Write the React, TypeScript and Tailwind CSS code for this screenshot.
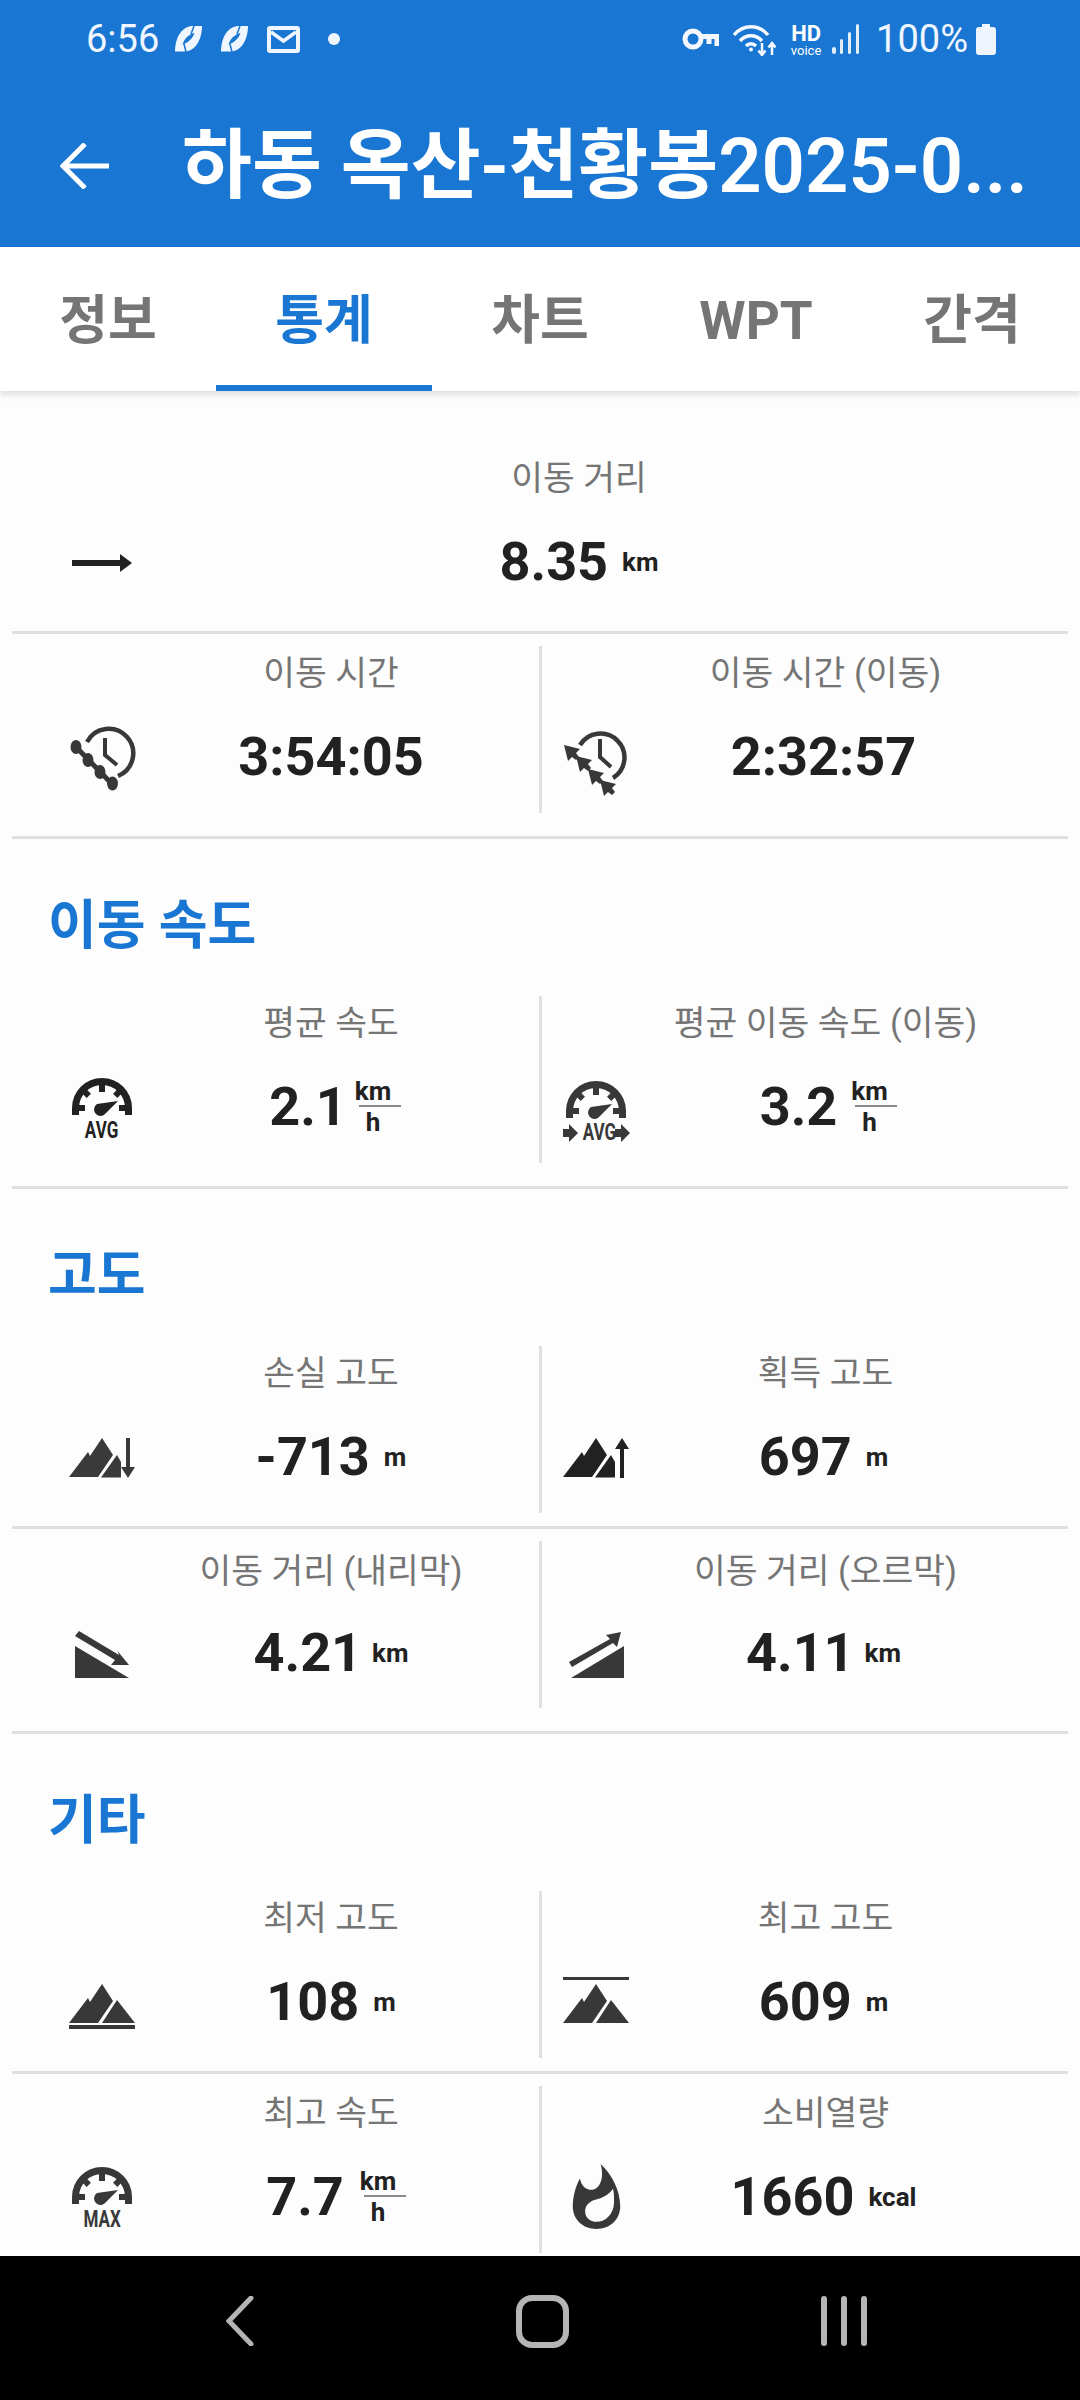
import type { ReactNode } from "react"

const blue = "#1976d2"

function SyncIcon() {
    return <svg width="27" height="26" viewBox="0 0 27 26">
        <path d="M27 0C27 14 20 25 10 25.500L0 25.500C0 10 8 0 18 0Z" fill="#f0f6ff"/>
        <path d="M19.500 7C14 8 9 13 7.500 18.500C13 17 18 12 19.500 7Z" fill={blue}/>
        <path d="M19 0L16 8M11 26L9 18" stroke={blue} strokeWidth="1.500"/>
    </svg>
}

function MailIcon() {
    return <svg width="33" height="27" viewBox="0 0 33 27">
        <rect width="33" height="27" rx="3" fill="#f0f6ff"/>
        <rect x="4" y="4" width="25" height="19" fill={blue}/>
        <path d="M4 6L16.500 15L29 6" fill="none" stroke="#f0f6ff" strokeWidth="3.500"/>
    </svg>
}

function KeyIcon() {
    return <svg width="37" height="22" viewBox="0 0 37 22" fill="none" stroke="#f5f9ff">
        <circle cx="11" cy="11" r="8" strokeWidth="5"/>
        <path d="M18 8.500H35V18M27 9V16" strokeWidth="5"/>
    </svg>
}

function WifiIcon() {
    return <svg width="44" height="33" viewBox="0 0 44 33" fill="none" stroke="#f5f9ff" strokeWidth="3.500">
        <path d="M2 12C11 1 27 1 36 12"/>
        <path d="M8 18C14 11 24 11 30 18"/>
        <path d="M14 23C17 20 21 20 24 23"/>
        <circle cx="19" cy="26.500" r="2" fill="#f5f9ff" stroke="none"/>
        <path d="M30 20V32M26.500 27.500L30 32L33.500 27.500" strokeWidth="2.500"/>
        <path d="M40 32V20M36.500 24.500L40 20L43.500 24.500" strokeWidth="2.500"/>
    </svg>
}

function SignalIcon() {
    return <svg width="28" height="30" viewBox="0 0 28 30" fill="#e3eefb">
        <rect x="0" y="23" width="4" height="7" rx="2"/>
        <rect x="8" y="15" width="3" height="15" rx="1.500"/>
        <rect x="16" y="8" width="3" height="22" rx="1.500"/>
        <rect x="24" y="0" width="3" height="30" rx="1.500"/>
    </svg>
}

function BatteryIcon() {
    return <svg width="20" height="31" viewBox="0 0 20 31" fill="#eef5ff">
        <path d="M6 0H14V3H17Q20 3 20 6V28Q20 31 17 31H3Q0 31 0 28V6Q0 3 3 3H6Z"/>
    </svg>
}

function StatusBar() {
    return <div className="flex h-[78px] items-center pl-[86px] pr-[84px] text-[38px] leading-none text-[#f0f6ff]">
        <span className="mr-[16px]">6:56</span>
        <div className="mr-[19px]"><SyncIcon/></div>
        <div className="mr-[19px]"><SyncIcon/></div>
        <MailIcon/>
        <div className="ml-[28px] h-[12px] w-[12px] rounded-full bg-[#f0f6ff]"></div>
        <div className="ml-auto"><KeyIcon/></div>
        <div className="ml-[13px]"><WifiIcon/></div>
        <div className="ml-[14px] mt-[2px] flex w-[32px] flex-col items-center font-bold text-white">
            <span className="text-[22px] leading-[20px]">HD</span>
            <span className="text-[13px] font-normal leading-[13px]">voice</span>
        </div>
        <div className="ml-[10px]"><SignalIcon/></div>
        <span className="ml-[16px]">100%</span>
        <div className="ml-[8px]"><BatteryIcon/></div>
    </div>
}

function Header() {
    return <div className="bg-[#1976d2]">
        <StatusBar/>
        <div className="flex h-[169px] items-center pl-[60px] pt-[6px]">
            <svg width="49" height="46" viewBox="0 0 49 46" fill="none" stroke="#fff" strokeWidth="5">
                <path d="M49 23H3M25 1L3 23L25 45"/>
            </svg>
            <div className="ml-[73px] whitespace-nowrap text-[76px] font-semibold leading-none text-white">하동 옥산-천황봉2025-0...</div>
        </div>
    </div>
}

function Tabs() {
    const tabs = ["정보", "통계", "차트", "WPT", "간격"]
    return <div className="relative z-10 flex h-[144px] bg-white shadow-[0_4px_6px_rgba(0,0,0,0.12)]">
        {tabs.map((tab, i) => (
            <div key={tab} className={i === 1
                ? "flex w-[216px] items-center justify-center border-b-[6px] border-[#1976d2] pt-[12px] text-[53px] font-bold text-[#1976d2]"
                : "flex w-[216px] items-center justify-center border-b-[6px] border-transparent pt-[12px] text-[53px] font-bold text-[#757575]"}>
                {tab}
            </div>
        ))}
    </div>
}

function ArrowRightIcon() {
    return <svg width="60" height="18" viewBox="0 0 60 18" fill="#212121">
        <rect x="0" y="6" width="48" height="6"/>
        <path d="M48 0L60 9L48 18Z"/>
    </svg>
}

function ClockDotsIcon() {
    return <svg width="70" height="74" viewBox="0 0 70 74" fill="none" stroke="#383838">
        <path d="M20 21A24.500 24.500 0 1 1 51 55" strokeWidth="4.500"/>
        <path d="M38 17V34L50 44" strokeWidth="4"/>
        <path d="M9 26L45 63" strokeWidth="5"/>
        <g fill="#383838" stroke="none">
            <ellipse cx="9" cy="26" rx="5.500" ry="7"/>
            <ellipse cx="21" cy="39" rx="5.500" ry="7"/>
            <ellipse cx="33" cy="51" rx="5.500" ry="7"/>
            <ellipse cx="45.500" cy="62.500" rx="5.500" ry="7"/>
        </g>
    </svg>
}

function SmallPointer({ x, y }: { x: number; y: number }) {
    return <path transform={`translate(${x} ${y})`} d="M0 0L16 4L12 8L15 12L12 15L8 12L4 16Z"/>
}

function ClockPointersIcon() {
    return <svg width="68" height="76" viewBox="0 0 68 76" fill="none" stroke="#383838">
        <path d="M18 25A24 24 0 1 1 51 58" strokeWidth="4.500"/>
        <path d="M38 19V37L49 47" strokeWidth="4"/>
        <g fill="#383838" stroke="none">
            <SmallPointer x={2} y={25}/>
            <SmallPointer x={14} y={36}/>
            <SmallPointer x={26} y={49}/>
            <SmallPointer x={38} y={60}/>
        </g>
    </svg>
}

// speedometer dial without its caption
function GaugeDial({ color }: { color: string }) {
    return <svg width="60" height="38" viewBox="0 0 60 38" fill={color}>
        <path d="M3.500 37V30A26.500 26.500 0 0 1 56.500 30V37" fill="none" stroke={color} strokeWidth="7"/>
        <rect x="27" y="6" width="6" height="8"/>
        <rect x="11" y="12" width="6" height="7" transform="rotate(-45 14 15)"/>
        <rect x="43" y="12" width="6" height="7" transform="rotate(45 46 15)"/>
        <rect x="5" y="27" width="8" height="6"/>
        <rect x="47" y="27" width="8" height="6"/>
        <path d="M46 23L34 35A6.500 6.500 0 1 1 25 26Z"/>
    </svg>
}

function GaugeIcon({ label, color, className }: { label: string; color: string; className: string }) {
    return <div className={`flex flex-col items-center ${className}`} style={{ color }}>
        <GaugeDial color={color}/>
        <span className="mt-[5px] scale-x-[0.74] text-[23px] font-bold leading-[20px]">{label}</span>
    </div>
}

function GaugeMoveIcon() {
    return <div className="mt-[8px] flex flex-col items-center text-[#383838]">
        <GaugeDial color="#383838"/>
        <div className="mt-[4px] flex items-center">
            <svg width="15" height="18" viewBox="0 0 15 18" fill="#383838"><path d="M0 5H6V0L15 9L6 18V13H0Z"/></svg>
            <span className="w-[37px] scale-x-[0.74] text-center text-[23px] font-bold leading-[20px]">AVG</span>
            <svg width="15" height="18" viewBox="0 0 15 18" fill="#383838"><path d="M0 5H6V0L15 9L6 18V13H0Z"/></svg>
        </div>
    </div>
}

const bigPeak = "M0 39L19 14L21 18L33 0L44 17L29 39Z"

function MountainDownIcon() {
    return <svg width="66" height="40" viewBox="0 0 66 40" fill="#3a3a3a">
        <path d={bigPeak}/>
        <path d="M32 39.500L48 17L52 24V39.500Z"/>
        <path d="M57 0H61V29H66L59 40L52 29H57Z"/>
    </svg>
}

function MountainUpIcon() {
    return <svg width="66" height="40" viewBox="0 0 66 40" fill="#212121">
        <path d={bigPeak}/>
        <path d="M32 39.500L48 17L52 24V39.500Z"/>
        <path d="M57 40H61V11H66L59 0L52 11H57Z"/>
    </svg>
}

function SlopeDownIcon() {
    return <svg className="mt-[4px]" width="55" height="48" viewBox="0 0 55 48" fill="#383838">
        <path d="M0 15L54 47H0Z"/>
        <path d="M4 0L44 24L42.500 20L54 34L36 34L40 29L0 5Z"/>
    </svg>
}

function SlopeUpIcon() {
    return <svg className="mt-[4px]" width="55" height="48" viewBox="0 0 55 48" fill="#383838">
        <path d="M2 47L55 15V47Z"/>
        <path d="M0 31L41 8L37 4L52 1L48 16L44 12L3 36Z"/>
    </svg>
}

function MountainsIcon() {
    return <>
        <path d={bigPeak}/>
        <path d="M33 39L48 16L66 39Z"/>
    </>
}

function LowestIcon() {
    return <svg className="mt-[8px]" width="66" height="45" viewBox="0 0 66 45" fill="#383838">
        <MountainsIcon/>
        <rect x="0" y="41" width="66" height="4"/>
    </svg>
}

function HighestIcon() {
    return <svg className="-mt-[5px]" width="66" height="46" viewBox="0 0 66 46" fill="#383838">
        <rect x="0" y="0" width="66" height="3"/>
        <g transform="translate(0 7)"><MountainsIcon/></g>
    </svg>
}

function FlameIcon() {
    return <svg className="-mt-[3px]" width="49" height="65" viewBox="0 0 46 63" fill="#383838">
        <path fillRule="evenodd" d="M27 0C38 10 46 26 46 41C46 54 36 63 23 63C10 63 0 54 0 41C0 31 3 21 7 14C8 21 13 25 18 25C26 25 31 14 27 0ZM39 24C34 31 28 33 21 35C15 37 12 41 12 46C12 52 17 56 23 56C32 56 40 48 40 37C40 32 40 28 39 24Z"/>
    </svg>
}

function Unit({ children, tight }: { children: ReactNode; tight?: boolean }) {
    return <span className={tight
        ? "ml-[10px] text-[26px] font-bold leading-none"
        : "ml-[14px] text-[26px] font-bold leading-none"}>{children}</span>
}

function SpeedUnit({ className }: { className: string }) {
    return <div className={`flex w-[46px] flex-col items-start text-[26px] font-bold leading-none ${className}`}>
        <span className="h-[26px]">km</span>
        <div className="ml-[4px] mt-[1px] h-[2px] w-[42px] bg-[#8a8a8a]"></div>
        <span className="ml-[11px] mt-[2px] h-[26px]">h</span>
    </div>
}

type StatProps = {
    icon: ReactNode
    label: string
    value: string
    unit?: ReactNode
}

// one stat cell: icon on the left, caption above a big value
function Stat({ icon, label, value, unit, right, low }: StatProps & { right?: boolean; low?: boolean }) {
    return <div className={right ? "flex h-[167px] w-[527px] pl-[18px]" : "flex h-[167px] w-[527px] pl-[54px]"}>
        <div className="flex w-[72px] items-center justify-center pt-[56px]">{icon}</div>
        <div className={`flex flex-col ${right ? "w-[387px]" : "w-[386px]"} ${low ? "pt-[3px]" : ""}`}>
            <div className="flex h-[54px] items-center justify-center whitespace-nowrap text-[34.500px] leading-none text-[#757575]">{label}</div>
            <div className={right
                ? "flex flex-1 items-center justify-center pr-[4px] text-[#212121]"
                : "flex flex-1 items-center justify-center text-[#212121]"}>
                <span className="text-[54px] font-bold leading-none">{value}</span>
                {unit}
            </div>
        </div>
    </div>
}

function StatRow({ left, right, low }: { left: StatProps; right: StatProps; low?: boolean }) {
    return <div className="ml-[12px] mt-[12px] flex">
        <Stat {...left} low={low}/>
        <div className="h-[167px] w-[3px] bg-[#e0e0e0]"></div>
        <Stat {...right} right low={low}/>
    </div>
}

function Divider({ extra }: { extra?: boolean }) {
    return <div className={extra ? "mx-[12px] mt-[23px] h-[3px] bg-[#e0e0e0]" : "mx-[12px] mt-[13px] h-[3px] bg-[#e0e0e0]"}></div>
}

function SectionTitle({ children }: { children: ReactNode }) {
    return <div className="flex h-[145px] items-center pl-[48px] pt-[30px] text-[53px] font-bold leading-none text-[#1976d2]">{children}</div>
}

export default function App() {
    return <div className="flex h-[2400px] w-[1080px] flex-col overflow-hidden bg-[#fdfdfd] font-['Roboto','Noto_Sans_CJK_KR',sans-serif]">
        <Header/>
        <Tabs/>
        <div className="flex-1 overflow-hidden">
            <div className="ml-[12px] mr-[12px] mt-[60px] flex h-[167px] pl-[54px]">
                <div className="flex w-[72px] items-center justify-center pt-[56px]"><ArrowRightIcon/></div>
                <div className="flex w-[882px] flex-col">
                    <div className="flex h-[54px] items-center justify-center text-[34.500px] leading-none text-[#757575]">이동 거리</div>
                    <div className="flex flex-1 items-center justify-center text-[#212121]">
                        <span className="text-[54px] font-bold leading-none">8.35</span>
                        <Unit>km</Unit>
                    </div>
                </div>
            </div>
            <Divider/>
            <StatRow
                left={{ icon: <ClockDotsIcon/>, label: "이동 시간", value: "3:54:05" }}
                right={{ icon: <ClockPointersIcon/>, label: "이동 시간 (이동)", value: "2:32:57" }}
            />
            <Divider extra/>

            <SectionTitle>이동 속도</SectionTitle>
            <StatRow
                left={{ icon: <GaugeIcon label="AVG" color="#212121" className="mt-[3px]"/>, label: "평균 속도", value: "2.1", unit: <SpeedUnit className="ml-[8px] -mr-[8px]"/> }}
                right={{ icon: <GaugeMoveIcon/>, label: "평균 이동 속도 (이동)", value: "3.2", unit: <SpeedUnit className="ml-[14px] -mr-[10px]"/> }}
            />
            <Divider extra/>

            <SectionTitle>고도</SectionTitle>
            <StatRow
                left={{ icon: <MountainDownIcon/>, label: "손실 고도", value: "-713", unit: <Unit>m</Unit> }}
                right={{ icon: <MountainUpIcon/>, label: "획득 고도", value: "697", unit: <Unit>m</Unit> }}
            />
            <Divider/>
            <StatRow
                low
                left={{ icon: <SlopeDownIcon/>, label: "이동 거리 (내리막)", value: "4.21", unit: <Unit tight>km</Unit> }}
                right={{ icon: <SlopeUpIcon/>, label: "이동 거리 (오르막)", value: "4.11", unit: <Unit tight>km</Unit> }}
            />
            <Divider extra/>

            <SectionTitle>기타</SectionTitle>
            <StatRow
                left={{ icon: <LowestIcon/>, label: "최저 고도", value: "108", unit: <Unit>m</Unit> }}
                right={{ icon: <HighestIcon/>, label: "최고 고도", value: "609", unit: <Unit>m</Unit> }}
            />
            <Divider/>
            <StatRow
                left={{ icon: <GaugeIcon label="MAX" color="#383838" className="mt-[2px]"/>, label: "최고 속도", value: "7.7", unit: <SpeedUnit className="ml-[16px] -mr-[10px]"/> }}
                right={{ icon: <FlameIcon/>, label: "소비열량", value: "1660", unit: <Unit>kcal</Unit> }}
            />
        </div>
        <div className="flex h-[144px] shrink-0 items-center justify-center bg-black pb-[14px] pl-[4px]">
            <div className="flex w-[302px] justify-center">
                <svg width="28" height="50" viewBox="0 0 28 50" fill="none" stroke="#b5b5b5" strokeWidth="5" strokeLinecap="round"><path d="M25 2L3 25L25 48"/></svg>
            </div>
            <div className="flex w-[302px] justify-center">
                <div className="h-[53px] w-[53px] rounded-[16px] border-[6px] border-[#b5b5b5]"></div>
            </div>
            <div className="flex w-[302px] justify-center gap-[14px]">
                <div className="h-[50px] w-[6px] rounded-full bg-[#b5b5b5]"></div>
                <div className="h-[50px] w-[6px] rounded-full bg-[#b5b5b5]"></div>
                <div className="h-[50px] w-[6px] rounded-full bg-[#b5b5b5]"></div>
            </div>
        </div>
    </div>
}
